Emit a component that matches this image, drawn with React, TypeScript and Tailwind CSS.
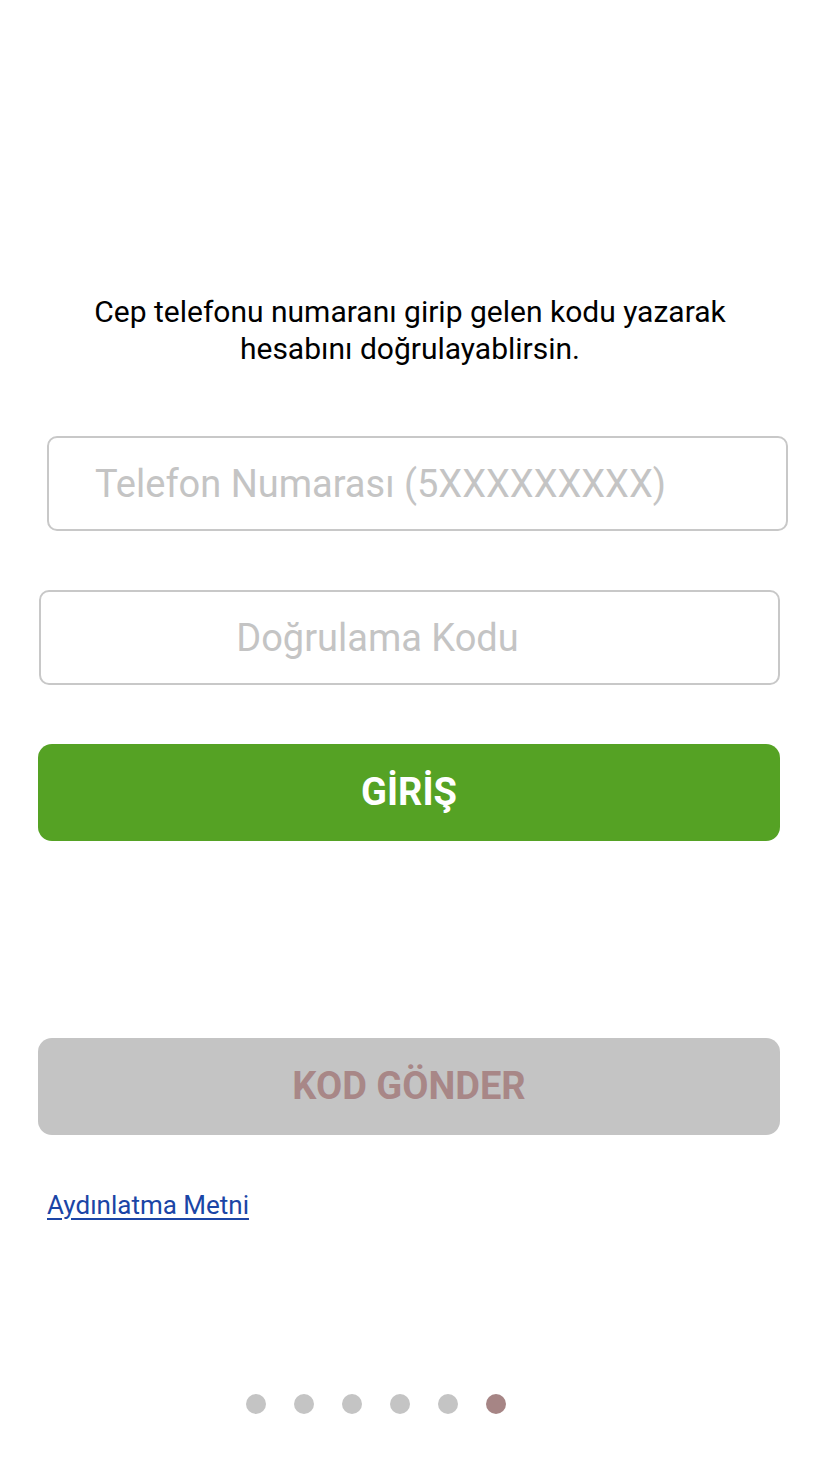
import { useState } from "react";

export default function App() {
  const [phone, setPhone] = useState("");
  const [code, setCode] = useState("");
  const pages = [0, 1, 2, 3, 4, 5];

  return (
    <div className="w-[828px] h-[1472px] bg-white flex flex-col font-['Roboto',sans-serif] text-black">
      <p className="mt-[293px] text-center text-[30px] leading-[37px] px-6 pr-[32px]">
        Cep telefonu numaranı girip gelen kodu yazarak
        <br />
        hesabını doğrulayablirsin.
      </p>

      <input
        value={phone}
        onChange={(e) => setPhone(e.target.value)}
        placeholder="Telefon Numarası (5XXXXXXXXX)"
        className="mt-[69px] ml-[47px] w-[741px] h-[95px] rounded-[10px] border-2 border-[#c8c8c8] pl-[46px] text-[38px] outline-none placeholder:text-[#c4c4c4]"
      />

      <input
        value={code}
        onChange={(e) => setCode(e.target.value)}
        placeholder="Doğrulama Kodu"
        className="mt-[59px] ml-[39px] w-[741px] h-[95px] rounded-[10px] border-2 border-[#c8c8c8] pr-[64px] text-center text-[38px] outline-none placeholder:text-[#c4c4c4]"
      />

      <button className="mt-[59px] ml-[38px] w-[742px] h-[97px] rounded-[14px] bg-[#55a224] text-white text-[38px] font-bold">
        GİRİŞ
      </button>

      <button className="mt-[197px] ml-[38px] w-[742px] h-[97px] rounded-[14px] bg-[#c4c4c4] text-[#a88787] text-[38px] font-bold">
        KOD GÖNDER
      </button>

      <a
        href="#"
        className="mt-[53px] ml-[47px] self-start text-[26px] leading-[34px] text-[#1b45a6] underline underline-offset-4"
      >
        Aydınlatma Metni
      </a>

      <div className="mt-[172px] ml-[246px] flex gap-[28px]">
        {pages.map((p) => (
          <span
            key={p}
            className={
              p === 5
                ? "w-[20px] h-[20px] rounded-full bg-[#a68585]"
                : "w-[20px] h-[20px] rounded-full bg-[#c4c4c4]"
            }
          />
        ))}
      </div>
    </div>
  );
}
